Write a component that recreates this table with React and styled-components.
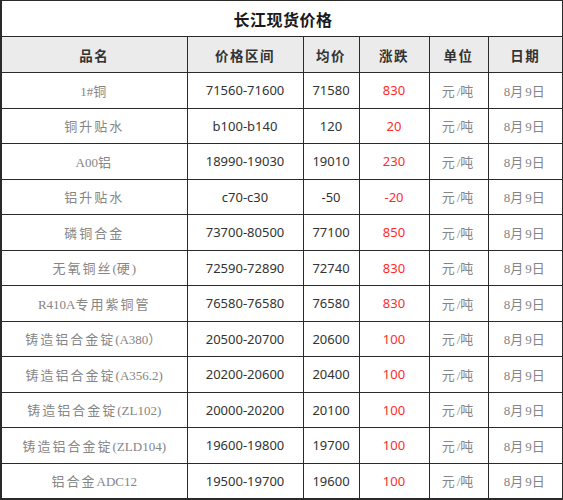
import React from "react";
import styled, { createGlobalStyle } from "styled-components";

const Global = createGlobalStyle`
  html, body { margin: 0; padding: 0; background: #ffffff; }
  body { font-family: "Noto Sans", "Noto Sans CJK SC", sans-serif; }
`;

const Table = styled.table`
  border-collapse: collapse;
  table-layout: fixed;
  width: 562px;
  border: 2px solid #2a2a2a;
  border-top-width: 1px;
`;

const Cell = styled.td`
  border: 1px solid #2a2a2a;
  padding: 0;
  text-align: center;
  vertical-align: middle;
  white-space: nowrap;
  overflow: hidden;
`;

const TitleCell = styled(Cell)`
  height: 35px;
  font-family: "Noto Sans CJK SC", sans-serif;
  font-size: 16px;
  font-weight: 700;
  color: #1a1a1a;
  letter-spacing: 0.5px;
  padding-left: 2px;
`;

const HeadCell = styled(Cell)`
  height: 35px;
  background: #ebebeb;
  font-family: "Noto Sans CJK SC", sans-serif;
  font-size: 13.5px;
  font-weight: 700;
  color: #333;
  letter-spacing: 1.5px;
`;

const Row = styled.tr`
  height: 35.5px;
`;

const NameCell = styled(Cell)`
  font-family: "Liberation Serif", "Noto Sans CJK SC", serif;
  font-size: 13px;
  color: #858585;
`;

const Cjk = styled.span`
  font-family: "Noto Sans CJK SC", sans-serif;
  font-weight: 400;
  letter-spacing: 2px;
`;

const Latin = styled.span`
  letter-spacing: 0;
`;

const NumCell = styled(Cell)`
  font-family: "Noto Sans", sans-serif;
  font-size: 13px;
  color: ${(p) => (p.$red ? "#ff2b2b" : "#333333")};
`;

const GrayCell = styled(Cell)`
  font-family: "Liberation Serif", "Noto Sans CJK SC", serif;
  font-size: 13px;
  color: #858585;
`;

const columns = [186, 116, 56, 70, 59, 75];

const rows = [
  ["1#铜", "71560-71600", "71580", "830"],
  ["铜升贴水", "b100-b140", "120", "20"],
  ["A00铝", "18990-19030", "19010", "230"],
  ["铝升贴水", "c70-c30", "-50", "-20"],
  ["磷铜合金", "73700-80500", "77100", "850"],
  ["无氧铜丝(硬)", "72590-72890", "72740", "830"],
  ["R410A专用紫铜管", "76580-76580", "76580", "830"],
  ["铸造铝合金锭(A380）", "20500-20700", "20600", "100"],
  ["铸造铝合金锭(A356.2)", "20200-20600", "20400", "100"],
  ["铸造铝合金锭(ZL102)", "20000-20200", "20100", "100"],
  ["铸造铝合金锭(ZLD104)", "19600-19800", "19700", "100"],
  ["铝合金ADC12", "19500-19700", "19600", "100"],
];

function Mixed({ text }) {
  const parts = text.match(/[\u3000-\u9fff\uff00-\uffef]+|[^\u3000-\u9fff\uff00-\uffef]+/g) || [];
  return parts.map((p, i) =>
    /[\u3000-\u9fff\uff00-\uffef]/.test(p) ? <Cjk key={i}>{p}</Cjk> : <Latin key={i}>{p}</Latin>
  );
}

export default function App() {
  return (
    <>
      <Global />
      <Table>
        <colgroup>
          {columns.map((w, i) => (
            <col key={i} style={{ width: w }} />
          ))}
        </colgroup>
        <tbody>
          <tr>
            <TitleCell colSpan={6}>长江现货价格</TitleCell>
          </tr>
          <tr>
            {["品名", "价格区间", "均价", "涨跌", "单位", "日期"].map((h) => (
              <HeadCell key={h}>{h}</HeadCell>
            ))}
          </tr>
          {rows.map((r) => (
            <Row key={r[0]}>
              <NameCell>
                <Mixed text={r[0]} />
              </NameCell>
              <NumCell>{r[1]}</NumCell>
              <NumCell>{r[2]}</NumCell>
              <NumCell $red>{r[3]}</NumCell>
              <GrayCell>
                <Mixed text="元/吨" />
              </GrayCell>
              <GrayCell>
                <Mixed text="8月9日" />
              </GrayCell>
            </Row>
          ))}
        </tbody>
      </Table>
    </>
  );
}
